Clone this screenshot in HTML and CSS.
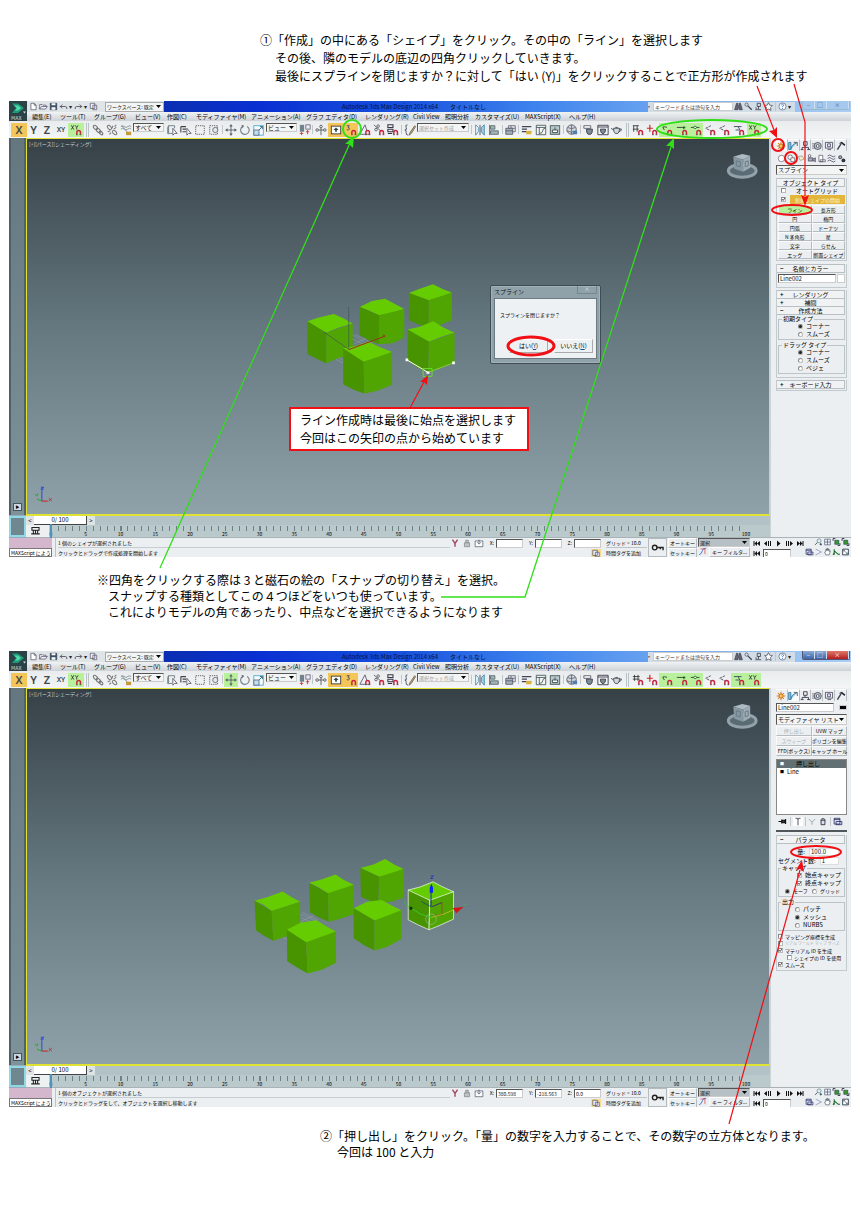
FILE: index.html
```html
<!DOCTYPE html>
<html lang="ja">
<head>
<meta charset="utf-8">
<title>スプラインの作成と押し出し</title>
<link rel="stylesheet" href="styles.css">
</head>
<body>
<svg class="sprite" aria-hidden="true">
<defs>
<symbol id="mag" viewBox="0 0 14 14"><path d="M8 12.5V9.6a2.1 2.1 0 0 1 4.200 0v2.900" fill="none" stroke="#c8233f" stroke-width="1.700"/><path d="M7 12.500h2M11.200 12.500h2" stroke="#555"/></symbol>
<symbol id="xymag" viewBox="0 0 14 14"><path d="M1.500 1.500l3 5M4.500 1.500l-3 5M6 1.500l1.800 2.500L9.600 1.500M7.800 4v2.500" stroke="#333" fill="none"/><use href="#mag"/></symbol>
<symbol id="link" viewBox="0 0 14 14"><g fill="none" stroke="#777" stroke-width="1.300"><ellipse cx="4" cy="4" rx="3" ry="1.800" transform="rotate(45 4 4)"/><ellipse cx="7.500" cy="7.500" rx="3" ry="1.800" transform="rotate(45 7.500 7.500)"/><ellipse cx="10.500" cy="10.500" rx="2.500" ry="1.500" transform="rotate(45 10.500 10.500)"/></g></symbol>
<symbol id="unlink" viewBox="0 0 14 14"><g fill="none" stroke="#777" stroke-width="1.200"><ellipse cx="4" cy="4" rx="3" ry="1.800" transform="rotate(45 4 4)"/><ellipse cx="10" cy="10" rx="3" ry="1.800" transform="rotate(45 10 10)"/><path d="M8 2l-1 3M12 4L9 6M2 9l3-1M4 12l2-2M12 1l-2 2"/></g></symbol>
<symbol id="bind" viewBox="0 0 14 14"><path d="M1 3q2-2 4 0t4 0 4 0M1 6q2-2 4 0t4 0 4 0M2 2l7 8" fill="none" stroke="#7b8a90"/><rect x="7" y="9" width="6" height="4" fill="#c69a3a"/></symbol>
<symbol id="sel" viewBox="0 0 14 14"><path d="M3 2h7v3M3 2v9h4M3 2l-1 2v7l1 1" fill="none" stroke="#66757c"/><path d="M8 5v8l2-2h3z" fill="#fff" stroke="#556"/></symbol>
<symbol id="list" viewBox="0 0 14 14"><path d="M1 3h6M3 6h4M3 9h4M1 3v7" stroke="#444" fill="none" stroke-width="1.300"/><path d="M8 5v8l2-2h3z" fill="#fff" stroke="#556"/></symbol>
<symbol id="dash" viewBox="0 0 14 14"><rect x="2" y="2" width="10" height="10" fill="none" stroke="#555" stroke-dasharray="1.500 1"/></symbol>
<symbol id="dashc" viewBox="0 0 14 14"><rect x="2" y="2" width="9" height="10" fill="none" stroke="#555" stroke-dasharray="1.500 1"/><circle cx="8.500" cy="7" r="3" fill="#e4eaec" stroke="#667"/></symbol>
<symbol id="move" viewBox="0 0 14 14"><path d="M7 2v10M2 7h10" stroke="#556"/><path d="M7 0l2 3H5zM7 14l2-3H5zM0 7l3-2v4zM14 7l-3-2v4z" fill="#566"/></symbol>
<symbol id="rot" viewBox="0 0 14 14"><path d="M9.500 2.800A5 5 0 1 1 4 3" fill="none" stroke="#71828a" stroke-width="1.300"/><path d="M3 1l3 1-2 3z" fill="#667"/></symbol>
<symbol id="scale" viewBox="0 0 14 14"><rect x="1" y="2" width="11" height="11" fill="#f6fbfd" stroke="#4aa9cf"/><rect x="1" y="7" width="6" height="6" fill="#bde2ee" stroke="#668"/><path d="M7 7l4-4M8 3h3v3" stroke="#267" fill="none"/></symbol>
<symbol id="pivot" viewBox="0 0 14 14"><rect x="1" y="1" width="5" height="8" fill="#71828c"/><rect x="8" y="1" width="5" height="5" fill="#eef" stroke="#667"/><path d="M3 9v4M1 11h4M10 7v5M8 9h4" stroke="#c33"/></symbol>
<symbol id="manip" viewBox="0 0 14 14"><path d="M7 1v12M2 7h10" stroke="#555"/><g fill="#eef" stroke="#555"><circle cx="7" cy="3" r="1.500"/><circle cx="2.500" cy="7" r="1.500"/><circle cx="11.500" cy="7" r="1.500"/></g></symbol>
<symbol id="key" viewBox="0 0 14 14"><rect x="1.500" y="2.500" width="11" height="9" fill="#fff" stroke="#333"/><path d="M7 4l3 3H8v2H6V7H4z" fill="#344"/></symbol>
<symbol id="snap3" viewBox="0 0 14 14"><path d="M2 2h3L3.500 4Q5.500 4 5 6T2 6.500" fill="none" stroke="#445"/><use href="#mag"/></symbol>
<symbol id="angle" viewBox="0 0 14 14"><path d="M1 12h11M1 12L7 1l2 6" fill="none" stroke="#556"/><use href="#mag"/></symbol>
<symbol id="pct" viewBox="0 0 14 14"><path d="M1 1l9 8" stroke="#556"/><circle cx="6" cy="2.500" r="1.500" fill="none" stroke="#556"/><circle cx="3.500" cy="6.500" r="1.500" fill="none" stroke="#556"/><use href="#mag"/></symbol>
<symbol id="spin" viewBox="0 0 14 14"><path d="M1 1h6v3H1zM1 6h6v3H1zM1 11h5" fill="none" stroke="#334" stroke-width="1.200"/><use href="#mag"/></symbol>
<symbol id="edit" viewBox="0 0 14 14"><path d="M4 1Q1 1 2.500 4T1 7q2 0 1.500 3T5 13" fill="none" stroke="#445"/><path d="M12.500 2L7 10l-1 3 2.500-2L13.500 3z" fill="#d9a96a" stroke="#665"/></symbol>
<symbol id="mirror" viewBox="0 0 14 14"><path d="M2 1v12l3-4V4z" fill="#fff" stroke="#4488a8"/><path d="M12 1v12L8.500 9V4z" fill="#9fd0e4" stroke="#4488a8"/><path d="M7 1v12" stroke="#445"/></symbol>
<symbol id="align" viewBox="0 0 14 14"><path d="M2 1v12" stroke="#445"/><path d="M3 2h5v4H3zM3 8h9v4H3z" fill="#a6b5bc" stroke="#566"/></symbol>
<symbol id="layers" viewBox="0 0 14 14"><path d="M4 2h8v7H4zM4 5h8M7 2v7" fill="#e6ecee" stroke="#667"/><path d="M1 5h8v7H1zM1 8h8" fill="#a7b4ba" stroke="#556"/></symbol>
<symbol id="rib" viewBox="0 0 14 14"><path d="M1 3h11M1 6h6M1 9h11" stroke="#445" stroke-width="1.500"/><path d="M6 8h6v4H6z" fill="#d9b13f"/></symbol>
<symbol id="curve" viewBox="0 0 14 14"><path d="M1.500 1.500h11v11h-11zM1.500 4h11M5 4v8" fill="#f4f6f7" stroke="#455"/><path d="M5 11q4 0 4-3t3-3" fill="none" stroke="#455"/></symbol>
<symbol id="schem" viewBox="0 0 14 14"><rect x="1.500" y="2" width="11" height="10" fill="#b9c6cb" stroke="#455"/><path d="M7 4v3M4 7h6v3H4z" stroke="#344" fill="#fff"/></symbol>
<symbol id="mat" viewBox="0 0 14 14"><circle cx="6.500" cy="6.500" r="5.500" fill="#cfd9dd" stroke="#556"/><path d="M2 4q4 3 9 0M1 8q5 3 11 0M6.500 1v11" fill="none" stroke="#667"/><path d="M8 8h5v4H8z" fill="#4d7fb5"/></symbol>
<symbol id="tea" viewBox="0 0 14 14"><path d="M3 5h7q0 5-2 6H5Q3 10 3 5zM10 6q3-1 2 1t-3 2M3 7L0 5M5 4h3" fill="#cfdadd" stroke="#445"/></symbol>
<symbol id="teaset" viewBox="0 0 14 14"><path d="M1 2h8v3H1z" fill="#fff" stroke="#556"/><path d="M4 6h7q0 5-2 6H6Q4 11 4 6z" fill="#7e8e95" stroke="#334"/></symbol>
<symbol id="teafr" viewBox="0 0 14 14"><path d="M1 1.500h12v11H1zM1 3.500h12" fill="#f2f5f6" stroke="#334"/><path d="M4 6h6q0 4-2 5H6Q4 10 4 6z" fill="#7e8e95" stroke="#334"/></symbol>
<symbol id="s0" viewBox="0 0 14 14"><path d="M1 3h8M1 6h8M3 1v7M7 1v7" stroke="#333" fill="none"/><use href="#mag"/></symbol>
<symbol id="s1" viewBox="0 0 14 14"><path d="M1 2h7M2 2v7M6 2v7M1 6h7" stroke="#333" fill="none"/><use href="#mag"/></symbol>
<symbol id="s2" viewBox="0 0 14 14"><path d="M1 5h7M4.500 1v8" stroke="#c22" stroke-width="1.300"/><use href="#mag"/></symbol>
<symbol id="s3" viewBox="0 0 14 14"><path d="M2 4l2 3M4 3l3 1" stroke="#333"/><circle cx="3" cy="3.500" r="1" fill="#172"/><use href="#mag"/></symbol>
<symbol id="s4" viewBox="0 0 14 14"><path d="M1 4h9M9 3v3" stroke="#333"/><circle cx="10" cy="4" r="1" fill="#172"/><use href="#mag"/></symbol>
<symbol id="s5" viewBox="0 0 14 14"><path d="M1 4h10" stroke="#333"/><circle cx="6" cy="4" r="1.500" fill="#fff" stroke="#172"/><use href="#mag"/></symbol>
<symbol id="s6" viewBox="0 0 14 14"><path d="M8 2L2 5l6 3" stroke="#445" fill="none" stroke-dasharray="3 1"/><use href="#mag"/></symbol>
<symbol id="s7" viewBox="0 0 14 14"><path d="M1 3h9M3 7h5L6 3" stroke="#345" fill="none"/><use href="#mag"/></symbol>
<symbol id="new" viewBox="0 0 14 14"><path d="M3 2h5l3 3v7H3zM8 2v3h3" fill="#fff" stroke="#445"/></symbol>
<symbol id="open" viewBox="0 0 14 14"><path d="M1 11V4h4l1 1h5v2M1 11l3-4h9l-3 4z" fill="#eef" stroke="#445"/></symbol>
<symbol id="save" viewBox="0 0 14 14"><path d="M2 2h10v10H2z" fill="#3c526b" stroke="#234"/><path d="M4 2h6v3H4zM4 8h6v4H4z" fill="#fff"/></symbol>
<symbol id="undo" viewBox="0 0 14 14"><path d="M2 7h8q3 0 2 4M5 4L2 7l3 3" fill="none" stroke="#445" stroke-width="1.300"/></symbol>
<symbol id="redo" viewBox="0 0 14 14"><path d="M12 7H4q-3 0-2 4M9 4l3 3-3 3" fill="none" stroke="#445" stroke-width="1.300"/></symbol>
<symbol id="proj" viewBox="0 0 14 14"><path d="M2 2h7v8H2zM6 5h6v7H6z" fill="#eef" stroke="#445"/></symbol>
<symbol id="bino" viewBox="0 0 14 14"><path d="M4 2h2v4h2V2h2l3 10H8V9H6v3H1z" fill="#667" stroke="#334"/></symbol>
<symbol id="wrench" viewBox="0 0 14 14"><circle cx="4" cy="4" r="2.500" fill="none" stroke="#445"/><path d="M6 6l6 6" stroke="#445" stroke-width="2"/></symbol>
<symbol id="comm" viewBox="0 0 14 14"><path d="M5 2h5v5H5zM7 7v4M2 12h9M2 9l3 1" fill="none" stroke="#334" stroke-width="1.200"/></symbol>
<symbol id="star" viewBox="0 0 14 14"><path d="M7 1l2 4 4 .500-3 3 1 4.500-4-2-4 2 1-4.500-3-3L5 5z" fill="#fff" stroke="#334"/></symbol>
<symbol id="help" viewBox="0 0 14 14"><circle cx="7" cy="7" r="5.500" fill="#fff" stroke="#457"/><path d="M5 5q2-3 4 0 0 1-2 2v1M7 9.500v1.500" fill="none" stroke="#26c" stroke-width="1.300"/></symbol>
<symbol id="sun" viewBox="0 0 14 14"><path d="M7 1v12M1 7h12M3 3l8 8M11 3l-8 8" stroke="#d87a22" stroke-width="1.500"/><circle cx="7" cy="7" r="2.800" fill="#ffc957" stroke="#b5651d"/></symbol>
<symbol id="mod" viewBox="0 0 14 14"><path d="M1 12V2h3v10zM4 12Q5 4 12 3" fill="#8ec9ea" stroke="#367da5" stroke-width="1.300"/><path d="M8 2h5v5" fill="none" stroke="#334"/></symbol>
<symbol id="hier" viewBox="0 0 14 14"><path d="M5 1h5v5H5zM7 6v3M3 12V9h9v3M1 12h4M10 12h4" fill="none" stroke="#334" stroke-width="1.200"/></symbol>
<symbol id="motion" viewBox="0 0 14 14"><circle cx="8" cy="7" r="5" fill="#bbc5ca" stroke="#334"/><circle cx="8" cy="7" r="2" fill="#fff" stroke="#334"/><path d="M0 4h4M0 7h3M0 10h4" stroke="#556"/></symbol>
<symbol id="disp" viewBox="0 0 14 14"><path d="M2 2h10v8H2zM5 4h4v4H5zM5 12h5" fill="#eef" stroke="#334"/></symbol>
<symbol id="ham" viewBox="0 0 14 14"><path d="M7 4L2 12" stroke="#445" stroke-width="2"/><path d="M4 3l4-2 5 4-1 2-4-3z" fill="#223"/></symbol>
<symbol id="geo" viewBox="0 0 14 14"><circle cx="7" cy="7" r="5" fill="#fff" stroke="#556"/></symbol>
<symbol id="shp" viewBox="0 0 14 14"><circle cx="5" cy="5" r="3.500" fill="#fff" stroke="#445"/><path d="M6 6h6v6H6z" fill="#fff" stroke="#445"/></symbol>
<symbol id="light" viewBox="0 0 14 14"><path d="M2 4l6-1 3 5-6 2z" fill="#f4eec9" stroke="#887"/></symbol>
<symbol id="cam" viewBox="0 0 14 14"><circle cx="4" cy="3" r="2" fill="#fff" stroke="#334"/><path d="M2 6h7v5H2zM9 8l4-2v6l-4-2" fill="#aab" stroke="#334"/></symbol>
<symbol id="helper" viewBox="0 0 14 14"><path d="M3 2h6v10H3zM5 9h8v3H5z" fill="#fff" stroke="#445"/></symbol>
<symbol id="wave" viewBox="0 0 14 14"><path d="M1 3q3-3 6 0t6 0M1 7q3-3 6 0t6 0M1 11q3-3 6 0t6 0" fill="none" stroke="#446" stroke-width="1.200"/></symbol>
<symbol id="gears" viewBox="0 0 14 14"><circle cx="5" cy="5" r="3" fill="#556"/><circle cx="10" cy="10" r="3" fill="#334"/><circle cx="5" cy="5" r="1" fill="#fff"/></symbol>
<symbol id="pin" viewBox="0 0 14 14"><path d="M0 7h5M5 4v6M5 5h5v4H5M11 3v8" stroke="#111" stroke-width="1.800" fill="#333"/></symbol>
<symbol id="endr" viewBox="0 0 14 14"><path d="M3 2h3l1 2 1-2h3M7 4v9" fill="none" stroke="#223" stroke-width="1.200"/></symbol>
<symbol id="uniq" viewBox="0 0 14 14"><path d="M2 3l5 5 5-5M7 8v4" fill="none" stroke="#9aa" stroke-width="1.500"/></symbol>
<symbol id="trash" viewBox="0 0 14 14"><path d="M4 5h6v7H4zM3 5q4-5 8 0" fill="#dde" stroke="#223" stroke-width="1.300"/></symbol>
<symbol id="conf" viewBox="0 0 14 14"><path d="M1 2h9v9H1zM1 4h9M4 7h9v5H4z" fill="#dde8ff" stroke="#225" stroke-width="1.200"/></symbol>
<symbol id="first" viewBox="0 0 14 14"><path d="M1 2h2v10H1zM8 2v10L3 7zM14 2v10L8 7z" fill="#111"/></symbol>
<symbol id="prev" viewBox="0 0 14 14"><path d="M6 2v10L0 7zM8 2h2v10H8zM12 2h2v10h-2z" fill="#111"/></symbol>
<symbol id="play" viewBox="0 0 14 14"><path d="M4 1v12l7-6z" fill="#111"/></symbol>
<symbol id="zoom" viewBox="0 0 14 14"><circle cx="8" cy="5" r="3.500" fill="#dff1f0" stroke="#467"/><path d="M5 8l-4 4M11 9v4M9 11h4" stroke="#244" stroke-width="1.500"/></symbol>
<symbol id="zall" viewBox="0 0 14 14"><path d="M2 2h10v10H2zM7 2v10M2 7h10" fill="#eef" stroke="#345"/></symbol>
<symbol id="zext" viewBox="0 0 14 14"><path d="M1 1h4M1 1v4M13 9v4H9" stroke="#223" stroke-width="1.500" fill="none"/><path d="M4 4h7v7H4z" fill="#3b9a2e" stroke="#134"/></symbol>
<symbol id="fov" viewBox="0 0 14 14"><path d="M2 2l10 5-10 5" fill="#eef" stroke="#678"/></symbol>
<symbol id="hand" viewBox="0 0 14 14"><path d="M4 12L2 7l2-1V2h2v3V1h2v4-3h2v4l2-1-2 7z" fill="#fff" stroke="#345"/></symbol>
<symbol id="walk" viewBox="0 0 14 14"><path d="M3 2v10M3 5l7 6h3M3 8L1 12" stroke="#162" stroke-width="1.800" fill="none"/></symbol>
<symbol id="maxv" viewBox="0 0 14 14"><path d="M2 2h10v10H2z" fill="#fff" stroke="#234" stroke-width="1.500"/><path d="M4 4l6 6M6 4H4v2M10 8v2H8" stroke="#234" fill="none"/></symbol>
<symbol id="lock" viewBox="0 0 14 14"><path d="M3 6h8v6H3zM5 6V2h4v4" fill="#bcc5c8" stroke="#777"/></symbol>
<symbol id="iso" viewBox="0 0 14 14"><path d="M3 1l4 6 4-6M7 7v5" fill="none" stroke="#a24860" stroke-width="2.200"/></symbol>
<symbol id="abs" viewBox="0 0 14 14"><path d="M1 3h12v9H1z" fill="#fff" stroke="#345"/><path d="M4 5l3 3 3-3M7 1v6" stroke="#345" fill="none"/></symbol>
<symbol id="bigkey" viewBox="0 0 14 14"><circle cx="4" cy="7" r="2.500" fill="none" stroke="#222" stroke-width="1.500"/><path d="M6 7h7v3M10 7v2" stroke="#222" stroke-width="1.500" fill="none"/></symbol>
<symbol id="tang" viewBox="0 0 14 14"><path d="M1 12Q5 11 6 6t6-4" fill="none" stroke="#36c" stroke-width="1.300"/><path d="M3 3h7v8" fill="none" stroke="#c33"/></symbol>
<symbol id="trk" viewBox="0 0 14 14"><path d="M2 2h10v4H2zM4 6v4M10 6v4M1 11h12M7 6v4" fill="none" stroke="#222" stroke-width="1.500"/></symbol>
<symbol id="viewcube" viewBox="0 0 32 28"><ellipse cx="16" cy="18" rx="14" ry="6.500" fill="#5a6b74" stroke="#93a2aa" stroke-width="3"/><path d="M7 4l9-3 8 2-7 4z" fill="#aebac1"/><path d="M7 4l10 3v12L8 16z" fill="#8698a1"/><path d="M17 7l7-4v12l-7 4z" fill="#9eacb5"/><path d="M10 8l4 1v5l-4-1zM19 9l3-1v5l-3 1z" fill="none" stroke="#677b86"/></symbol>
<symbol id="tripod" viewBox="0 0 22 20"><path d="M9 15V4" stroke="#2948e0"/><path d="M9 15h6" stroke="#c22"/><path d="M9 15l-5-2" stroke="#2a2"/><path d="M8 1h3L8 3h3" stroke="#2948e0" fill="none"/><path d="M16 12l3 3M19 12l-3 3" stroke="#b33"/><path d="M2 8l2 2 1-3" stroke="#2a2" fill="none"/></symbol>
<symbol id="logo" viewBox="0 0 18 19"><path d="M0 0h18v19H0z" fill="#2c4146"/><path d="M3 2h6l6 4.500-6 5H3l4-5z" fill="#1f9a76"/><path d="M5 4h4l3 2.500L9 9H6l2-2.500z" fill="#52dcae"/><path d="M14 10h3l-1.500 2z" fill="#cdd"/></symbol>
</defs>
</svg>

<main class="page">
<p class="note note-a"><span>①「作成」の中にある「シェイプ」をクリック。その中の「ライン」を選択します</span><span>その後、隣のモデルの底辺の四角クリックしていきます。</span><span>最後にスプラインを閉じますか？に対して「はい (Y)」をクリックすることで正方形が作成されます</span></p>

<section class="app" aria-label="スプラインの作成">
<header class="head">
<button class="logo" aria-label="MAX"><svg><use href="#logo"/></svg><b>MAX</b></button>
<div class="title">
<div class="quick"><svg><use href="#new"/></svg><svg><use href="#open"/></svg><svg><use href="#save"/></svg><svg><use href="#undo"/></svg><i>▾</i><svg><use href="#redo"/></svg><i>▾</i><svg><use href="#proj"/></svg><select aria-label="ワークスペース"><option>ワークスペース: 既定</option></select></div>
<h2>Autodesk 3ds Max Design 2014 x64<span>タイトルなし</span></h2>
<div class="search"><i>‣</i><input aria-label="検索" placeholder="キーワードまたは語句を入力"><svg><use href="#bino"/></svg><svg><use href="#wrench"/></svg><svg><use href="#comm"/></svg><svg><use href="#star"/></svg><span class="bar"></span><svg><use href="#help"/></svg><i>▾</i></div>
<div class="winbtns off"><button>–</button><button>□</button><button class="close">×</button></div>
</div>
<nav class="menu"><button>編集(E)</button><button>ツール(T)</button><button>グループ(G)</button><button>ビュー(V)</button><button>作図(C)</button><button>モディファイヤ(M)</button><button>アニメーション(A)</button><button>グラフ エディタ(D)</button><button>レンダリング(R)</button><button>Civil View</button><button>照明分析</button><button>カスタマイズ(U)</button><button>MAXScript(X)</button><button>ヘルプ(H)</button></nav>
</header>
<div class="tools">
<button class="w16 on">X</button><button class="w12">Y</button><button>Z</button><button class="xy">XY</button><button class="w16 lit"><svg><use href="#xymag"/></svg></button><span class="grip"></span>
<button><svg><use href="#link"/></svg></button><button><svg><use href="#unlink"/></svg></button><button><svg><use href="#bind"/></svg></button><select class="s-all" aria-label="選択フィルタ"><option>すべて</option></select><button><svg><use href="#sel"/></svg></button><button><svg><use href="#list"/></svg></button><button><svg><use href="#dash"/></svg></button><button><svg><use href="#dashc"/></svg></button><span class="bar"></span>
<button><svg><use href="#move"/></svg></button><button><svg><use href="#rot"/></svg></button><button><svg><use href="#scale"/></svg></button><select class="s-all" aria-label="参照座標系"><option>ビュー</option></select><button class="w12"><svg><use href="#pivot"/></svg></button><span class="bar"></span>
<button><svg><use href="#manip"/></svg></button><button class="w16 on"><svg><use href="#key"/></svg></button><button class="on"><svg><use href="#snap3"/></svg></button><button><svg><use href="#angle"/></svg></button><button><svg><use href="#pct"/></svg></button><button><svg><use href="#spin"/></svg></button><span class="bar"></span>
<button><svg><use href="#edit"/></svg></button><select class="s-set" aria-label="選択セット"><option>選択セット作成</option></select><span class="bar"></span><button><svg><use href="#mirror"/></svg></button><button><svg><use href="#align"/></svg></button><span class="bar"></span><button class="w12"><svg><use href="#layers"/></svg></button><span class="bar"></span>
<button><svg><use href="#rib"/></svg></button><button><svg><use href="#curve"/></svg></button><button><svg><use href="#schem"/></svg></button><span class="bar"></span><button><svg><use href="#mat"/></svg></button><span class="bar"></span><button><svg><use href="#teaset"/></svg></button><button><svg><use href="#teafr"/></svg></button><button><svg><use href="#tea"/></svg></button><span class="grip"></span>
<button><svg><use href="#s1"/></svg></button><button><svg><use href="#s2"/></svg></button><button class="w16 lit"><svg><use href="#s3"/></svg></button><button class="lit"><svg><use href="#s4"/></svg></button><button class="lit"><svg><use href="#s5"/></svg></button><button><svg><use href="#s6"/></svg></button><button><svg><use href="#s6"/></svg></button><button class="w16"><svg><use href="#s7"/></svg></button><button class="lit"><svg><use href="#xymag"/></svg></button>
</div>
<div class="work">
<div class="stage">
<aside class="strip"><button aria-label="展開">▶</button></aside>
<div class="view">
<svg class="scene" viewBox="26 138 744 378" aria-hidden="true">
<use href="#viewcube" x="729" y="152" width="32" height="28"/><use href="#tripod" x="30" y="488" width="22" height="20"/>
<g transform="translate(290 270) scale(.3333)">
<path d="M185 195l50 30M195 195l50 25M180 205l50 25M190 225l40-20M135 270l30 15M145 265l20 12" stroke="#a9b6bb" fill="none"/>
<g class="cube"><path class="t" d="M357 70L390 57L430 43L460 58L487 68L450 83L417 92L385 80z"/><path class="l" d="M357 70l60 22v80l-25-5-35-15z"/><path class="r" d="M417 92l70-24v84l-35 14-35 6z"/></g>
<g class="cube"><path class="t" d="M208 112L245 94L285 87L315 103L343 118L300 132L267 137L235 123z"/><path class="l" d="M208 112l59 25v88l-28-10-31-18z"/><path class="r" d="M267 137l76-19v87l-36 17-40 3z"/></g>
<g class="cube"><path class="t" d="M50 155L85 144L130 133L160 147L187 162L145 174L107 190L80 175z"/><path class="l" d="M50 155l57 35v92l-26-12-31-16z"/><path class="r" d="M107 190l80-28v93l-45 12-35 15z"/></g>
<g class="cube"><path class="t" d="M353 180L390 172L430 155L460 173L495 190L455 202L418 217L385 200z"/><path class="l" d="M353 180l65 37-3 93-32-14-30-24z"/><path class="r" d="M418 217l77-27v92l-45 16-35 12z"/></g>
<g class="cube"><path class="t" d="M158 237L195 230L235 217L270 234L306 248L260 266L220 278L190 262z"/><path class="l" d="M158 237l62 41 2 96-32-12-32-16z"/><path class="r" d="M220 278l86-30v99l-44 18-40 9z"/></g>
<path d="M175 112v128L100 188" fill="none" stroke="#40505c" stroke-width="2"/><path d="M175 241l110-41-7-4" fill="none" stroke="#a32a18" stroke-width="3"/>
<path d="M351 272l64 38" stroke="#fff" stroke-width="3"/><path d="M415 310l77-29" stroke="#9de060" stroke-width="2"/><path d="M347 268h8v8h-8zM410 307h9v7h-9zM488 277h8v8h-8z" fill="#fff"/><path d="M400 298h27v24h-27z" fill="none" stroke="#64dc32" stroke-width="3"/>
</g>
</svg>
<span class="viewlabel">[+][パース][シェーディング]</span>
<section class="dialog" role="dialog" aria-label="スプライン"><header>スプライン<button aria-label="閉じる">×</button></header><div class="dbody"><p>スプラインを閉じますか？</p><div class="acts"><button>はい(<u>Y</u>)</button><button>いいえ(<u>N</u>)</button></div></div></section>
<p class="callout">ライン作成時は最後に始点を選択します<br>今回はこの矢印の点から始めています</p>
</div>
<div class="thumb"></div>
<div class="slide"><button>&lt;</button><output>0/ 100</output><button>&gt;</button></div>
<div class="track"><svg><use href="#trk"/></svg><div class="ruler"><span>0</span><span>5</span><span>10</span><span>15</span><span>20</span><span>25</span><span>30</span><span>35</span><span>40</span><span>45</span><span>50</span><span>55</span><span>60</span><span>65</span><span>70</span><span>75</span><span>80</span><span>85</span><span>90</span><span>95</span><span>100</span></div></div>
</div>
<aside class="panel">
<div class="tabs"><button class="cur"><svg><use href="#sun"/></svg></button><button><svg><use href="#mod"/></svg></button><button><svg><use href="#hier"/></svg></button><button><svg><use href="#motion"/></svg></button><button><svg><use href="#disp"/></svg></button><button><svg><use href="#ham"/></svg></button></div>
<div class="cats"><svg><use href="#geo"/></svg><svg><use href="#shp"/></svg><svg><use href="#light"/></svg><svg><use href="#cam"/></svg><svg><use href="#helper"/></svg><svg><use href="#wave"/></svg><svg><use href="#gears"/></svg></div>
<select class="wide" aria-label="カテゴリ"><option>スプライン</option></select>
<section class="roll types"><h3>オブジェクト タイプ</h3>
<label class="chk in"><input type="checkbox">オートグリッド</label>
<div class="newshape"><input type="checkbox" checked aria-label="新規シェイプの開始"><button>新規シェイプの開始</button></div>
<div class="two"><button class="green">ライン</button><button>長方形</button><button>円</button><button>楕円</button><button>円弧</button><button>ドーナツ</button><button>N 多角形</button><button>星</button><button>文字</button><button>らせん</button><button>エッグ</button><button>断面シェイプ</button></div></section>
<section class="roll"><h3 class="minus">名前とカラー</h3><div class="namerow"><input aria-label="名前" value="Line002"><span class="sw"></span></div></section>
<section class="roll tight"><h3 class="plus">レンダリング</h3><h3 class="plus">補間</h3><h3 class="minus">作成方法</h3>
<fieldset><legend>初期タイプ</legend><label><input type="radio" name="a" checked>コーナー</label><label><input type="radio" name="a">スムーズ</label></fieldset>
<fieldset><legend>ドラッグ タイプ</legend><label><input type="radio" name="b" checked>コーナー</label><label><input type="radio" name="b">スムーズ</label><label><input type="radio" name="b">ベジェ</label></fieldset></section>
<section class="roll tight"><h3 class="plus">キーボード入力</h3></section>
</aside>
</div>
<footer class="status">
<div class="script"><span></span><span>MAXScript によう</span></div>
<div class="msgs"><p>1 個のシェイプが選択されました</p><p>クリックとドラッグで作成処理を開始します</p></div>
<div class="coords"><div><svg><use href="#iso"/></svg><svg><use href="#lock"/></svg><svg><use href="#abs"/></svg><label>X:<input></label><label>Y:<input></label><label>Z:<input></label></div><div class="tagrow"><svg class="tag"><use href="#proj"/></svg></div></div>
<div class="grid"><p>グリッド = 10.0</p><p>時間タグを追加</p></div>
<button class="setkey" aria-label="キーを設定"><svg><use href="#bigkey"/></svg></button>
<div class="keys"><button>オートキー</button><button>セットキー</button></div>
<div class="filt"><select aria-label="キー選択"><option>選択</option></select><div><svg><use href="#tang"/></svg><button>キー フィルタ...</button></div></div>
<div class="plays"><div><svg><use href="#first"/></svg><svg><use href="#prev"/></svg><svg><use href="#play"/></svg><svg class="flip"><use href="#prev"/></svg><svg class="flip"><use href="#first"/></svg></div><div><svg><use href="#first"/></svg><input aria-label="フレーム" value="0"></div></div>
<div class="navs"><svg><use href="#zoom"/></svg><svg><use href="#zall"/></svg><svg><use href="#zext"/></svg><svg><use href="#zext"/></svg><svg><use href="#conf"/></svg><svg><use href="#fov"/></svg><svg><use href="#hand"/></svg><svg><use href="#walk"/></svg><svg><use href="#maxv"/></svg></div>
</footer>
</section>

<p class="note note-b"><span>※四角をクリックする際は 3 と磁石の絵の「スナップの切り替え」を選択。</span><span>スナップする種類としてこの４つほどをいつも使っています。</span><span>これによりモデルの角であったり、中点などを選択できるようになります</span></p>

<section class="app" aria-label="押し出し">
<header class="head">
<button class="logo" aria-label="MAX"><svg><use href="#logo"/></svg><b>MAX</b></button>
<div class="title">
<div class="quick"><svg><use href="#new"/></svg><svg><use href="#open"/></svg><svg><use href="#save"/></svg><svg><use href="#undo"/></svg><i>▾</i><svg><use href="#redo"/></svg><i>▾</i><svg><use href="#proj"/></svg><select aria-label="ワークスペース"><option>ワークスペース: 既定</option></select></div>
<h2>Autodesk 3ds Max Design 2014 x64<span>タイトルなし</span></h2>
<div class="search"><i>‣</i><input aria-label="検索" placeholder="キーワードまたは語句を入力"><svg><use href="#bino"/></svg><svg><use href="#wrench"/></svg><svg><use href="#comm"/></svg><svg><use href="#star"/></svg><span class="bar"></span><svg><use href="#help"/></svg><i>▾</i></div>
<div class="winbtns"><button>–</button><button>□</button><button class="close">×</button></div>
</div>
<nav class="menu"><button>編集(E)</button><button>ツール(T)</button><button>グループ(G)</button><button>ビュー(V)</button><button>作図(C)</button><button>モディファイヤ(M)</button><button>アニメーション(A)</button><button>グラフ エディタ(D)</button><button>レンダリング(R)</button><button>Civil View</button><button>照明分析</button><button>カスタマイズ(U)</button><button>MAXScript(X)</button><button>ヘルプ(H)</button></nav>
</header>
<div class="tools">
<button class="w16 on">X</button><button class="w12">Y</button><button>Z</button><button class="xy">XY</button><button class="w16 lit"><svg><use href="#xymag"/></svg></button><span class="grip"></span>
<button><svg><use href="#link"/></svg></button><button><svg><use href="#unlink"/></svg></button><button><svg><use href="#bind"/></svg></button><select class="s-all" aria-label="選択フィルタ"><option>すべて</option></select><button><svg><use href="#sel"/></svg></button><button><svg><use href="#list"/></svg></button><button><svg><use href="#dash"/></svg></button><button><svg><use href="#dashc"/></svg></button><span class="bar"></span>
<button class="lit"><svg><use href="#move"/></svg></button><button><svg><use href="#rot"/></svg></button><button><svg><use href="#scale"/></svg></button><select class="s-all" aria-label="参照座標系"><option>ビュー</option></select><button class="w12"><svg><use href="#pivot"/></svg></button><span class="bar"></span>
<button><svg><use href="#manip"/></svg></button><button class="w16 on"><svg><use href="#key"/></svg></button><button class="on"><svg><use href="#snap3"/></svg></button><button><svg><use href="#angle"/></svg></button><button><svg><use href="#pct"/></svg></button><button><svg><use href="#spin"/></svg></button><span class="bar"></span>
<button><svg><use href="#edit"/></svg></button><select class="s-set" aria-label="選択セット"><option>選択セット作成</option></select><span class="bar"></span><button><svg><use href="#mirror"/></svg></button><button><svg><use href="#align"/></svg></button><span class="bar"></span><button class="w12"><svg><use href="#layers"/></svg></button><span class="bar"></span>
<button><svg><use href="#rib"/></svg></button><button><svg><use href="#curve"/></svg></button><button><svg><use href="#schem"/></svg></button><span class="bar"></span><button><svg><use href="#mat"/></svg></button><span class="bar"></span><button><svg><use href="#teaset"/></svg></button><button><svg><use href="#teafr"/></svg></button><button><svg><use href="#tea"/></svg></button><span class="grip"></span>
<button><svg><use href="#s0"/></svg></button><button><svg><use href="#s2"/></svg></button><button class="w16 lit"><svg><use href="#s3"/></svg></button><button class="lit"><svg><use href="#s4"/></svg></button><button class="lit"><svg><use href="#s5"/></svg></button><button><svg><use href="#s6"/></svg></button><button><svg><use href="#s6"/></svg></button><button class="w16 lit"><svg><use href="#s7"/></svg></button><button class="lit"><svg><use href="#xymag"/></svg></button>
</div>
<div class="work">
<div class="stage">
<aside class="strip"><button aria-label="展開">▶</button></aside>
<div class="view">
<svg class="scene" viewBox="26 688 744 378" aria-hidden="true">
<use href="#viewcube" x="729" y="702" width="32" height="28"/><use href="#tripod" x="30" y="1038" width="22" height="20"/>
<g transform="translate(240 840) scale(.3333)">
<path d="M178 225l50 22M185 220l45 22M180 235l40 18M178 248l40-18M125 295l20 8" stroke="#a9b6bb" fill="none"/>
<g class="cube"><path class="t" d="M40 184L80 173L125 156L150 172L178 187L135 202L92 215L66 196z"/><path class="l" d="M40 184l52 31 5 90-28-15-24-16z"/><path class="r" d="M92 215l86-28v85l-40 20-41 13z"/></g>
<g class="cube"><path class="t" d="M205 130L245 119L285 105L312 122L340 136L300 156L262 162L232 143z"/><path class="l" d="M205 130l57 32 3 86-30-13-27-16z"/><path class="r" d="M262 162l78-26v89l-38 13-37 10z"/></g>
<g class="cube"><path class="t" d="M360 85L400 75L435 58L465 76L491 88L450 105L417 112L388 98z"/><path class="l" d="M360 85l57 27-3 76-14 0-38-15z"/><path class="r" d="M417 112l74-24v87l-40 13h-36z"/></g>
<g class="cube"><path class="t" d="M340 207L380 187L425 182L455 199L484 213L445 235L403 244L370 225z"/><path class="l" d="M340 207l63 37v91l-30-15-33-22z"/><path class="r" d="M403 244l81-31v87l-44 24-37 11z"/></g>
<g class="cube"><path class="t" d="M138 272L180 250L228 243L258 262L286 277L240 304L196 310L165 293z"/><path class="l" d="M138 272l58 38 5 94-32-18-30-19z"/><path class="r" d="M196 310l90-33 1 95-42 20-44 12z"/></g>
<g class="cube hot"><path class="t" d="M505 152L540 143L580 127L610 143L642 157L605 175L570 183L535 172z"/><path class="l" d="M505 152l65 31-2 89-32-14-31-16z"/><path class="r" d="M570 183l72-26v83l-40 18-34 14z"/></g>
<path d="M574 200v-55" stroke="#1428cc" stroke-width="3"/><path d="M570 160h10v-15l-5-12-5 12z" fill="#0a25ff"/><path d="M573 109h8l-8 8h8" fill="none" stroke="#12c" stroke-width="2"/>
<path d="M575 203l32-13v38h-25" fill="none" stroke="#a33" stroke-width="2"/><path d="M545 187l30 16 32-13" fill="none" stroke="#139" stroke-width="2"/><path d="M574 235q40-8 70-24" fill="none" stroke="#cfc934" stroke-width="2"/><path d="M574 235q-35-8-60-28l-18-10" fill="none" stroke="#35c82a" stroke-width="3"/><circle cx="574" cy="240" r="16" fill="none" stroke="#9b9" stroke-width="2"/><path d="M672 203l-32 3 10 16z" fill="#d01616"/><circle cx="513" cy="207" r="5" fill="#163c14"/><path d="M492 185l4 8M672 195h7" stroke="#3c3" stroke-width="2"/>
</g>
</svg>
<span class="viewlabel">[+][パース][シェーディング]</span>
</div>
<div class="thumb"></div>
<div class="slide"><button>&lt;</button><output>0/ 100</output><button>&gt;</button></div>
<div class="track"><svg><use href="#trk"/></svg><div class="ruler"><span>0</span><span>5</span><span>10</span><span>15</span><span>20</span><span>25</span><span>30</span><span>35</span><span>40</span><span>45</span><span>50</span><span>55</span><span>60</span><span>65</span><span>70</span><span>75</span><span>80</span><span>85</span><span>90</span><span>95</span><span>100</span></div></div>
</div>
<aside class="panel">
<div class="tabs"><button><svg><use href="#sun"/></svg></button><button class="cur"><svg><use href="#mod"/></svg></button><button><svg><use href="#hier"/></svg></button><button><svg><use href="#motion"/></svg></button><button><svg><use href="#disp"/></svg></button><button><svg><use href="#ham"/></svg></button></div>
<div class="namerow obj"><input aria-label="オブジェクト名" value="Line002"><span class="sw black"></span></div>
<select class="wide" aria-label="モディファイヤ リスト"><option>モディファイヤ リスト</option></select>
<div class="two mods"><button disabled>押し出し</button><button>UVW マップ</button><button disabled>スウィープ</button><button>ポリゴンを編集</button><button>FFD(ボックス)</button><button>キャップ ホール</button></div>
<ul class="stack"><li class="cur">押し出し</li><li>Line</li></ul>
<div class="ops"><svg><use href="#pin"/></svg><span class="bar"></span><svg class="cur"><use href="#endr"/></svg><span class="bar"></span><svg><use href="#uniq"/></svg><svg><use href="#trash"/></svg><span class="bar"></span><svg><use href="#conf"/></svg></div>
<hr>
<section class="roll params"><h3 class="minus">パラメータ</h3>
<label class="num">量:<input value="100.0"></label><label class="num">セグメント数:<input value="1"></label>
<fieldset><legend>キャップ</legend><label><input type="checkbox" checked>始点キャップ</label><label><input type="checkbox" checked>終点キャップ</label><div class="pair"><label><input type="radio" name="c" checked>モーフ</label><label><input type="radio" name="c">グリッド</label></div></fieldset>
<fieldset class="outs"><legend>出力</legend><label><input type="radio" name="d">パッチ</label><label><input type="radio" name="d" checked>メッシュ</label><label><input type="radio" name="d">NURBS</label></fieldset>
<label class="chk"><input type="checkbox">マッピング座標を生成</label><label class="chk dim"><input type="checkbox" disabled>リアル ワールド マップ サイズ</label><label class="chk"><input type="checkbox" checked>マテリアル ID を生成</label><label class="chk in"><input type="checkbox">シェイプの ID を使用</label><label class="chk"><input type="checkbox" checked>スムーズ</label></section>
</aside>
</div>
<footer class="status">
<div class="script"><span></span><span>MAXScript によう</span></div>
<div class="msgs"><p>1 個のオブジェクトが選択されました</p><p>クリックとドラッグをして、オブジェクトを選択し移動します</p></div>
<div class="coords"><div><svg><use href="#iso"/></svg><svg><use href="#lock"/></svg><svg><use href="#abs"/></svg><label>X:<input value="380.598"></label><label>Y:<input value="-218.563"></label><label>Z:<input value="0.0"></label></div><div class="tagrow"><svg class="tag"><use href="#proj"/></svg></div></div>
<div class="grid"><p>グリッド = 10.0</p><p>時間タグを追加</p></div>
<button class="setkey" aria-label="キーを設定"><svg><use href="#bigkey"/></svg></button>
<div class="keys"><button>オートキー</button><button>セットキー</button></div>
<div class="filt"><select aria-label="キー選択"><option>選択</option></select><div><svg><use href="#tang"/></svg><button>キー フィルタ...</button></div></div>
<div class="plays"><div><svg><use href="#first"/></svg><svg><use href="#prev"/></svg><svg><use href="#play"/></svg><svg class="flip"><use href="#prev"/></svg><svg class="flip"><use href="#first"/></svg></div><div><svg><use href="#first"/></svg><input aria-label="フレーム" value="0"></div></div>
<div class="navs"><svg><use href="#zoom"/></svg><svg><use href="#zall"/></svg><svg><use href="#zext"/></svg><svg><use href="#zext"/></svg><svg><use href="#conf"/></svg><svg><use href="#fov"/></svg><svg><use href="#hand"/></svg><svg><use href="#walk"/></svg><svg><use href="#maxv"/></svg></div>
</footer>
</section>

<p class="note note-c"><span>②「押し出し」をクリック。「量」の数字を入力することで、その数字の立方体となります。</span><span>今回は 100 と入力</span></p>

<svg class="marks" viewBox="0 0 860 1209" preserveAspectRatio="none" aria-hidden="true">
<g fill="none" stroke="#30df18" stroke-width="1.300"><path d="M160 568L350 143M441 597h84L671 147"/><ellipse cx="712" cy="129" rx="55" ry="9" stroke-width="2"/><circle cx="352" cy="129" r="9" stroke-width="2"/></g>
<path d="M354 136l-9 8 4 0 4 4zM674 138l-8 8 4 0 4 3z" fill="#30df18"/>
<g fill="none" stroke="#f00f14" stroke-width="1.200"><path d="M757 86l17 44M794 84l11 38v74M410 408l15-28M729 1124l71-254"/><g stroke-width="2"><circle cx="778" cy="145" r="6"/><ellipse cx="791" cy="158" rx="6" ry="6"/><ellipse cx="792" cy="210" rx="20" ry="5"/><ellipse cx="816" cy="852" rx="25" ry="6"/></g><ellipse cx="531" cy="346" rx="23" ry="9" stroke-width="3"/></g>
<path d="M777 138l-8-7 5-1 3-3zM805 206l-4-11 4 2 4-2zM428 375l-8 7 4 0 3 3zM802 860l-6 10 4-1 4 3z" fill="#f00f14"/>
</svg>
</main>
</body>
</html>
```
FILE: styles.css
```css
*{box-sizing:border-box}
body{margin:0;background:#fff;color:#000;font-family:"Noto Sans CJK JP",sans-serif}
p,h2,h3,ul{margin:0;padding:0;font-weight:400;font-size:inherit}
.sprite{position:absolute;width:0;height:0}
.page{position:relative;padding:31px 9px 49px}
.note{font-size:12px;line-height:18px;white-space:nowrap}
.note span{display:block}
.note-a{padding-left:251px;margin-bottom:16px}
.note-a span+span{padding-left:15px}
.note-b{padding-left:88px;line-height:16px;margin:15px 0 31px}
.note-b span+span{padding-left:11px}
.note-c{padding-left:311px;line-height:16px;margin-top:21px}
.note-c span+span{padding-left:17px}
.marks{position:absolute;left:0;top:0;width:100%;height:100%;pointer-events:none}

.app{font-size:6px;line-height:8px;background:#eceff1;overflow:hidden}
.app svg{display:block;width:10px;height:9px;flex:none}
.app button{font:inherit;color:inherit;border:0;background:none;padding:0;margin:0;display:flex;align-items:center;justify-content:center;white-space:nowrap}
.app input,.app select{font:inherit;color:#111;border:1px solid #777;border-color:#555 #ccc #ccc #555;background-color:#fff;border-radius:0;padding:0 1px;margin:0;min-width:0;outline:0}
.app select{appearance:none;background:#f3f5f5 url("data:image/svg+xml,%3Csvg xmlns='http://www.w3.org/2000/svg' width='5' height='3'%3E%3Cpath d='M0 0h5L2.500 3z'/%3E%3C/svg%3E") no-repeat right 2px center}
.app input[type=checkbox],.app input[type=radio]{appearance:none;width:5px;height:5px;padding:0;flex:none;border-color:#888 #bbb #bbb #888}
.app input[type=radio]{border-radius:50%}
.app input[type=checkbox]:checked{background:#fff url("data:image/svg+xml,%3Csvg xmlns='http://www.w3.org/2000/svg' viewBox='0 0 5 5'%3E%3Cpath d='M.5 2l1.500 2L5 0' fill='none' stroke='%23000' stroke-width='1.200'/%3E%3C/svg%3E")}
.app input[type=radio]:checked{background:#222}
.bar{width:1px;height:9px;background:#c0c6ca;margin:0 1px;flex:none}

.head{display:grid;grid-template:11px 9px/18px 1fr}
.app .logo{grid-row:1/3;position:relative;background:#2c4146}
.logo svg{width:18px;height:20px}
.logo b{position:absolute;bottom:0;left:2px;font-size:5px;line-height:6px;color:#9cb2ae}
.title{display:flex;align-items:center;background:linear-gradient(90deg,#0b2fb4 18%,#0a2fd2 28%,#1650dc 45%,#3f84ee 62%,#8dbcf0 88%,#a9cdf4)}
.quick{display:flex;align-items:center;height:11px;background:#dfe4e7;flex:none;gap:1px;padding-left:2px;width:137px}
.quick svg{width:9px}
.quick i,.search i{font-style:normal;width:4px;color:#223}
.app .quick select{width:59px;height:10px;border-color:#aaa;margin-left:auto;font-size:5px;line-height:8px}
.title h2{flex:1;text-align:left;padding-left:178px;color:#061030;white-space:nowrap}
.title h2 span{margin-left:12px}
.search{display:flex;align-items:center;width:147px;height:10px;background:#d3dde6;gap:1px}
.app .search input{width:80px;height:9px;border-color:#ccc;font-size:5px}
.search input::placeholder{color:#333;opacity:1}
.search svg{width:9px}
.winbtns{display:flex;width:48px;height:9px;margin:0 1px 2px 7px;align-self:flex-start;border-radius:0 0 2px 2px;overflow:hidden;border:1px solid #557;border-top:0;color:#fff}
.app .winbtns button{flex:1;background:linear-gradient(#8ba9d5,#3c65a8);border-right:1px solid #cde}
.app .winbtns .close{flex:2;background:linear-gradient(#e0796a,#b41e1e)}
.app .winbtns.off{border-color:#9bc}
.app .winbtns.off button{background:#a5c9ee;color:#567}
.menu{display:grid;grid-template-columns:28px 34px 41px 32px 29px 55px 55px 59px 48px 32px 30px 50px 44px 1fr;padding-left:5px;background:linear-gradient(#f0f2f4,#cdd2d6)}
.app .menu button{justify-content:flex-start;line-height:9px}

.tools{display:flex;align-items:center;height:17px;padding-left:2px;background:linear-gradient(#e9ecee,#f3f5f6)}
.app .tools button{width:14px;height:14px;flex:none;font:600 11px/14px "Noto Sans",sans-serif;color:#3f474c}
.app .tools .w16{width:16px}
.app .tools .w12{width:13px}
.app .tools .xy{font-size:7px}
.tools svg{width:12px;height:12px}
.app .tools .on{background:#f4c65a}
.app .tools .lit{background:#b9f09b}
.grip{width:7px;height:14px;flex:none;background:linear-gradient(90deg,transparent 2px,#bcc3c7 2px 3px,transparent 3px 4px,#bcc3c7 4px 5px,transparent 5px)}
.app .tools select{height:9px;line-height:7px;flex:none;align-self:flex-start;margin-top:2px;margin-right:1px}
.tools .s-all{width:31px}
.app .tools .s-set{width:52px;color:#999;font-size:5px}

.work{display:flex}
.stage{flex:1;min-width:0;display:grid;grid-template:auto 9px 12px/17px 1fr}
.strip{background:linear-gradient(#64777f,#7e9299);border-left:2px solid #4f6068;border-right:2px solid #536168;display:flex;align-items:flex-end;justify-content:center;padding-bottom:5px}
.app .strip button{width:9px;height:8px;background:#cfd9dd;border:1px solid #44555d;font-size:4px}
.view{position:relative;border:1px solid #dfe232;border-width:1px 1px 2px 1px;background:linear-gradient(#364047,#65787f 50%,#8fa2a9)}
.view .scene{width:100%;height:auto;aspect-ratio:742/375}
.cube .t{fill:#66cc02}.cube .l{fill:#489400}.cube .r{fill:#50a502}
.hot path{stroke:#fff;stroke-width:2}
.viewlabel{position:absolute;left:2px;top:1px;font-size:5px;color:#c7d0d4}
.thumb{grid-row:2/4;border:2px solid #8fd8e6;background:#71878f;outline:1px solid #9ab}
.slide{display:flex;background:#b3c2c6}
.app .slide button{width:8px;background:#dde4e6}
.slide output{width:53px;text-align:center;background:#fff;border:1px solid #444;border-width:0 1px 1px 0;line-height:8px}
.track{display:flex;background:#bac9cc}
.track svg{background:#edf0f1;width:23px;height:12px;padding:1px 7px 1px 3px}
.ruler{flex:1;margin:0 24px 0 2px;display:flex;justify-content:space-between;align-items:flex-end;background:repeating-linear-gradient(90deg,#6d8187 0 1px,transparent 1px 1%) 0 1px/100% 5px no-repeat}
.ruler span{width:0;display:flex;justify-content:center;line-height:6px;font-size:5px}
.ruler span:first-child{outline:1px solid #4f93b8;height:12px;align-items:flex-end}

.panel{width:81px;flex:none;padding:1px 4px 0 5px;border-left:1px solid #cdd4d7}
.tabs,.cats,.ops{display:flex;height:12px;align-items:center}
.app .tabs button{flex:1;height:12px;border-right:1px solid #b7bfc3;border-top:1px solid #fff}
.app .tabs .cur{background:#fafbfb}
.tabs svg{height:10px}
.cats{justify-content:space-between;margin-top:1px;padding:0 1px}
.cats svg{width:9px}
.app .wide{display:block;width:100%;height:10px;line-height:8px}
.cats+.wide{margin-top:1px}
.roll{margin-top:3px;border:1px solid #c3cace;border-width:0 1px 1px 1px;padding:0 1px 1px}
.tight{margin-top:2px}
.roll h3{position:relative;text-align:center;border:1px solid #b8c0c4;border-width:1px 1px 1px 0;background:#f0f2f3;line-height:7px;margin:0 0 0 -1px}
.roll h3+h3{border-top:0}
.roll h3::before{position:absolute;left:3px;font-weight:700}
.minus::before{content:"−"}.plus::before{content:"+"}
.chk,fieldset label{display:flex;align-items:center;gap:3px;line-height:7px;white-space:nowrap}
.chk.in{padding-left:3px}
.types .chk{gap:10px}
.newshape{display:flex;align-items:center;height:11px;gap:4px;padding-left:3px}
.app .newshape button{flex:1;height:9px;background:#e4b53b;color:#fff7d0;font-size:5px}
.two{display:grid;grid-template-columns:minmax(0,1fr) minmax(0,1fr)}
.app .two button{height:9px;font-size:5px;border:1px solid #fff;border-color:#fafafa #b4bcc0 #b4bcc0 #fafafa}
.app .two .green{background:#b9f09b}
.namerow{display:flex;justify-content:space-between;margin:1px 0 3px}
.namerow input{width:58px;height:9px}
.sw{width:8px;height:9px;border:1px solid #ccc;background:#fff}
fieldset{margin:1px 0 2px;border:1px solid #bcc4c8;padding:0 0 1px 19px;min-width:0}
legend{margin-left:-16px;padding:0 1px;line-height:6px}
fieldset label{line-height:8px}
.obj{margin:2px 0}
.obj+.wide{height:11px}
.black{background:#000;height:5px;margin-top:2px}
.mods{margin:1px 0 3px}
.app .mods button{height:10px}
.app button:disabled{color:#aab2b6}
.stack{list-style:none;height:56px;border:1px solid #888;background:#fff}
.stack li{line-height:8px;padding-left:9px}
.stack li::before{content:"■";font-size:4px;margin:0 3px 0 -6px}
.stack .cur{background:#627074;padding-left:18px}
.stack .cur::before{margin:0 12px 0 -15px;color:#fff}
.ops{justify-content:space-between;padding:0 4px 0 2px}
.ops .cur{background:#fff}
.panel hr{margin:3px 0;border:0;height:2px;background:#4f575b}
.params{padding-bottom:2px}
.num{display:flex;align-items:center;justify-content:flex-end;gap:4px;height:9px;white-space:nowrap}
.params h3+.num{margin-top:3px}
.app .num input{width:30px;height:8px;border-color:#ddd;margin-right:6px}
.params fieldset{margin:0 0 2px;padding-left:18px}
.params .pair{display:flex;justify-content:space-between;margin-left:-12px;padding-right:4px}
.params .outs{padding-left:16px}
.params .outs legend{margin-left:-14px}
.params .chk,.params .pair{font-size:5px}
.params .chk{gap:2px}
.params .dim{color:#a8b0b4;font-size:4px}
.params .chk.in{padding-left:9px}

.dialog{position:absolute;left:62.4%;top:38.9%;width:111px;padding:0 3px 4px;background:#8fa1a9;border:1px solid #3f4c53;border-radius:2px;box-shadow:0 0 0 1px #a4b3ba inset}
.dialog header{height:12px;display:flex;justify-content:space-between;align-items:center;color:#111;font-size:6px}
.app .dialog header button{width:20px;height:8px;align-self:flex-start;border:1px solid #77878f;border-top:0;color:#dde}
.dbody{background:#edf1f3;border:1px solid #6c7a81;padding:12px 3px 5px 5px}
.dbody p{font-size:5px}
.acts{display:flex;gap:6px;margin-top:20px;justify-content:flex-end}
.app .acts button{width:39px;height:14px;border:1px solid #b4bcc0;border-color:#fff #aaa #aaa #fff}
.acts u{color:#158}
.callout{position:absolute;left:35.3%;top:71.4%;padding:2px 11px 2px 9px;background:#fff;border:2px solid #f00f14;font-size:12px;line-height:18px;white-space:nowrap}

.status{display:flex;height:20px;border-top:1px solid #a9b3b7;white-space:nowrap;font-size:5px}
.status p{line-height:9px}
.script{width:42px;display:grid;grid-template-rows:10px 9px}
.script span:first-child{background:#d4b6cd}
.script span:last-child{background:#fff;border:1px solid #777;padding-left:1px;line-height:7px}
.msgs{flex:1;margin-left:4px;padding-left:2px;border-left:1px solid #bcc4c8}
.msgs p+p{border-top:1px solid #c6cdd0}
.coords{width:151px}
.coords>div{display:flex;height:10px;align-items:center;gap:2px;justify-content:flex-end}
.coords label{display:flex;align-items:center;gap:2px;width:37px;justify-content:flex-end}
.coords input{width:27px;height:9px}
.app .tag{background:#f5dc8a}
.grid{width:46px;padding-left:5px}
.grid p{border-bottom:1px solid #bcc4c8}
.app .setkey{width:19px;border:1px solid #b4bcc0;margin:0 1px}
.setkey svg{width:13px;height:13px}
.keys{width:29px;display:grid;grid-template-rows:1fr 1fr}
.app .keys button,.app .filt button{border:1px solid #fff;border-color:#fff #b4bcc0 #b4bcc0 #fff}
.filt{width:52px;margin-left:1px}
.filt select{display:block;width:52px;height:9px;line-height:7px;background-color:#b7c0c4}
.filt div{display:flex;gap:1px;height:10px}
.filt div button{flex:1}
.plays{width:55px;padding-left:2px}
.plays div{display:flex;height:10px;align-items:center;gap:2px}
.plays svg{width:9px;height:7px}
.plays input{width:28px;height:9px}
.flip{transform:scaleX(-1)}
.navs{width:46px;display:grid;grid-template-columns:repeat(5,9px);grid-template-rows:10px 9px}
.navs svg:first-child{grid-column:2}
.app .navs svg{width:9px;height:8px}
```
